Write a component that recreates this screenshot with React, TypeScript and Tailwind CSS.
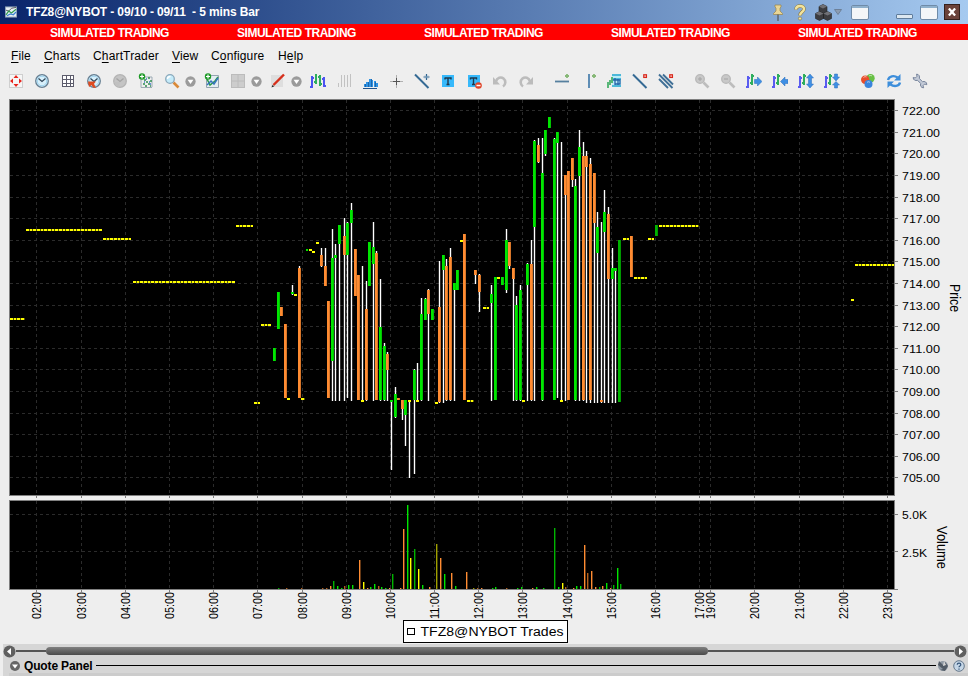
import * as React from "react"

type Tone = "g" | "o" | "G" | "O" | "y" | "Y"

const TONES: Record<Tone, string> = {
  g: "#00e600",
  G: "#00b400",
  o: "#ff8c32",
  O: "#b4601c",
  y: "#ffff00",
  Y: "#a0a000",
}

const HOURS: [number, string][] = [
  [36, "02:00"], [81, "03:00"], [125, "04:00"], [169, "05:00"], [213, "06:00"], [257, "07:00"], [302, "08:00"],
  [346, "09:00"], [390, "10:00"], [434, "11:00"], [478, "12:00"], [522, "13:00"], [567, "14:00"], [611, "15:00"],
  [655, "16:00"], [699, "17:00"], [710, "19:00"], [754, "20:00"], [799, "21:00"], [843, "22:00"], [887, "23:00"],
]

const PRICE_LINES = [110, 132, 153, 175, 197, 218, 240, 261, 283, 305, 326, 348, 369, 391, 413, 434, 456, 477]

// x, wick top, wick bottom, body top, body bottom, colour
const CANDLES: [number, number, number, number, number, Tone][] = [
  [274, 348, 361, 348, 361, "g"], [278, 292, 329, 292, 329, "g"], [281, 307, 316, 307, 316, "o"],
  [285, 324, 398, 324, 398, "o"], [292, 285, 295, 292, 294, "g"], [299, 266, 398, 268, 398, "o"],
  [321, 248, 267, 255, 266, "o"], [325, 248, 286, 266, 286, "o"], [328, 301, 398, 301, 398, "o"],
  [332, 229, 401, 258, 361, "g"], [335, 244, 401, 255, 258, "g"], [339, 225, 401, 225, 244, "g"],
  [344, 218, 401, 236, 255, "o"], [347, 222, 398, 223, 255, "g"], [351, 203, 401, 210, 223, "g"],
  [355, 249, 296, 249, 296, "o"], [358, 275, 400, 275, 400, "o"], [362, 266, 401, 266, 266, "g"],
  [366, 281, 401, 309, 400, "o"], [369, 242, 286, 242, 286, "g"], [373, 222, 401, 247, 264, "g"],
  [376, 251, 400, 253, 400, "o"], [380, 279, 401, 327, 400, "g"], [384, 343, 401, 346, 400, "g"],
  [387, 352, 401, 354, 370, "o"], [391, 400, 470, 400, 402, "g"], [395, 387, 418, 394, 417, "g"],
  [398, 398, 400, 398, 400, "o"], [402, 400, 420, 400, 409, "o"], [405, 400, 446, 400, 415, "g"],
  [409, 400, 478, 400, 400, "g"], [414, 369, 474, 370, 400, "g"], [417, 363, 401, 363, 363, "g"],
  [421, 298, 401, 314, 400, "g"], [425, 298, 320, 299, 320, "g"], [428, 289, 401, 290, 314, "o"],
  [432, 309, 320, 309, 320, "g"], [439, 261, 403, 307, 402, "o"], [443, 255, 403, 255, 270, "g"],
  [446, 259, 401, 266, 400, "o"], [450, 248, 401, 257, 400, "o"], [454, 283, 401, 283, 290, "g"],
  [457, 270, 290, 270, 290, "g"], [464, 234, 400, 234, 400, "o"], [475, 270, 284, 270, 275, "o"],
  [479, 274, 312, 275, 292, "o"], [491, 285, 401, 294, 303, "g"], [495, 277, 400, 277, 400, "g"],
  [502, 277, 285, 277, 285, "g"], [506, 229, 293, 240, 290, "g"], [509, 242, 269, 242, 266, "o"],
  [513, 268, 401, 268, 279, "o"], [516, 296, 401, 305, 400, "g"], [520, 285, 401, 290, 400, "g"],
  [527, 263, 401, 264, 285, "g"], [531, 240, 401, 264, 400, "o"], [534, 140, 401, 141, 227, "g"],
  [538, 138, 163, 145, 162, "o"], [542, 138, 401, 173, 400, "g"], [545, 130, 156, 130, 154, "g"],
  [549, 117, 128, 117, 128, "g"], [554, 138, 400, 139, 400, "g"], [557, 132, 398, 132, 143, "g"],
  [561, 142, 400, 142, 142, "g"], [565, 175, 401, 175, 195, "o"], [568, 171, 400, 171, 400, "o"],
  [572, 158, 187, 158, 180, "o"], [575, 179, 401, 186, 400, "g"], [579, 130, 401, 147, 176, "g"],
  [583, 142, 401, 156, 400, "o"], [586, 151, 403, 156, 167, "o"], [590, 158, 403, 164, 400, "o"],
  [594, 173, 403, 173, 223, "o"], [597, 212, 403, 227, 253, "g"], [601, 222, 403, 400, 402, "o"],
  [604, 190, 403, 212, 232, "g"], [608, 207, 403, 214, 279, "o"], [612, 248, 403, 268, 279, "g"],
  [615, 269, 403, 268, 271, "g"], [619, 240, 402, 240, 402, "G"], [631, 236, 277, 236, 277, "o"],
  [656, 225, 236, 225, 236, "G"],
]

// flat bars: start x, end x, y
const FLATS: [number, number, number][] = [
  [10, 25, 318], [26, 102, 229], [103, 131, 238], [133, 235, 281], [236, 253, 225], [254, 260, 402],
  [261, 271, 324], [287, 290, 398], [294, 297, 294], [301, 305, 398], [309, 312, 249], [312, 315, 251],
  [316, 319, 242], [361, 364, 400], [408, 411, 400], [416, 419, 400], [435, 438, 402], [460, 463, 240],
  [467, 474, 400], [483, 489, 307], [497, 500, 277], [522, 525, 400], [560, 563, 400], [623, 629, 238],
  [634, 647, 277], [648, 654, 238], [659, 699, 225], [851, 854, 299], [855, 894, 264],
]

const VOLUMES: [number, number, Tone][] = [
  [278, 588, "G"], [286, 588, "O"], [301, 588, "O"], [322, 588, "O"], [326, 588, "O"],
  [330, 586, "o"], [333, 581, "G"], [337, 586, "g"], [341, 588, "g"], [344, 586, "O"], [348, 585, "g"],
  [352, 585, "g"], [359, 560, "o"], [363, 582, "y"], [367, 588, "o"], [370, 587, "g"], [374, 584, "g"],
  [378, 586, "O"], [381, 587, "g"], [385, 588, "g"], [389, 588, "o"], [392, 574, "G"], [400, 588, "o"],
  [403, 529, "o"], [407, 505, "g"], [410, 558, "y"], [414, 549, "G"], [418, 569, "y"], [422, 585, "g"],
  [429, 587, "o"], [436, 544, "Y"], [440, 558, "o"], [444, 574, "g"], [451, 573, "o"], [455, 586, "g"],
  [466, 572, "o"], [473, 588, "Y"], [477, 588, "O"], [481, 588, "o"], [492, 588, "g"], [495, 587, "g"],
  [506, 588, "O"], [517, 588, "g"], [521, 587, "g"], [532, 588, "o"], [536, 587, "g"], [543, 588, "g"],
  [554, 528, "G"], [558, 587, "g"], [562, 583, "y"], [565, 587, "O"], [573, 588, "o"], [576, 586, "g"],
  [580, 586, "g"], [584, 545, "o"], [587, 573, "O"], [591, 571, "o"], [595, 587, "o"], [599, 587, "G"],
  [602, 586, "o"], [606, 583, "g"], [610, 588, "o"], [613, 585, "G"], [617, 568, "g"], [620, 584, "G"],
]

function Chart() {
  return (
    <svg width="968" height="552" viewBox="0 92 968 552" className="block" fontFamily="Liberation Sans, sans-serif">
      <g shapeRendering="crispEdges">
        <rect x="9" y="99" width="886" height="397" fill="#000" />
        <rect x="9" y="501" width="886" height="89" fill="#000" />
        <path d="M9 99.5h886M9.5 99v397M9 495.5h886M9 500.5h886M9.5 501v89M9 589.5h889" stroke="#808080" fill="none" />
        <path d="M894.5 99v397M894.5 501v89" stroke="#808080" />

        {/* Grid and axis ticks */}
        {PRICE_LINES.map((y) => (
          <React.Fragment key={y}>
            <path d={`M10 ${y + 0.5}h884`} stroke="#2b2b2b" strokeDasharray="3 3" />
            <path d={`M895 ${y + 0.5}h3`} stroke="#808080" />
          </React.Fragment>
        ))}
        {[514, 551].map((y) => (
          <React.Fragment key={y}>
            <path d={`M10 ${y + 0.5}h884`} stroke="#2b2b2b" strokeDasharray="3 3" />
            <path d={`M895 ${y + 0.5}h3`} stroke="#808080" />
          </React.Fragment>
        ))}
        {HOURS.map(([x, label]) => (
          <React.Fragment key={label}>
            <path d={`M${x + 0.5} 100v395M${x + 0.5} 501v88`} stroke="#2b2b2b" strokeDasharray="3 3" />
            <path d={`M${x + 0.5} 496v2M${x + 0.5} 590v2`} stroke="#808080" />
          </React.Fragment>
        ))}

        {/* Price bars */}
        {CANDLES.map(([x, top, bottom, open, close, tone]) => (
          <React.Fragment key={x}>
            {bottom - top > close - open && (
              <>
                <rect x={x - 1} y={top} width="3" height={bottom - top} fill="#fff" opacity=".18" />
                <rect x={x} y={top} width="1" height={bottom - top} fill="#fff" />
              </>
            )}
            {close > open && (
              <>
                <rect x={x - 1} y={open} width="3" height={close - open} fill={TONES[tone]} />
                <rect x={x + 1} y={open} width="1" height={close - open} fill="#000" opacity=".15" />
              </>
            )}
          </React.Fragment>
        ))}
        <rect x="306" y="249" width="2" height="2" fill="#00e600" />
        {FLATS.map(([from, to, y]) => (
          <React.Fragment key={`${from}-${y}`}>
            <rect x={from} y={y} width={to - from} height="2" fill="#5a5a00" />
            <path d={`M${from} ${y + 1}H${to}`} stroke="#ffff00" strokeWidth="2" strokeDasharray="2.67 1" />
          </React.Fragment>
        ))}

        {VOLUMES.map(([x, top, tone]) => (
          <React.Fragment key={x}>
            <rect x={x} y={top} width="1" height={589 - top} fill={TONES[tone]} />
            <rect x={x + 1} y={top} width="1" height={589 - top} fill={TONES[tone]} opacity=".4" />
          </React.Fragment>
        ))}
      </g>

      {/* Axis labels */}
      {PRICE_LINES.map((y, i) => (
        <text key={y} x="902" y={y + 5} fontSize="11.5" textLength="38" lengthAdjust="spacingAndGlyphs">
          {`${722 - i}.00`}
        </text>
      ))}
      <text x="902" y="518.5" fontSize="11.5" textLength="25" lengthAdjust="spacingAndGlyphs">5.0K</text>
      <text x="902" y="556.5" fontSize="11.5" textLength="25" lengthAdjust="spacingAndGlyphs">2.5K</text>
      {HOURS.map(([x, label]) => (
        <text key={label} transform={`translate(${x + 5} 619) rotate(-90)`} fontSize="12.5" textLength="27" lengthAdjust="spacingAndGlyphs">
          {label}
        </text>
      ))}
      <text transform="translate(950 284) rotate(90)" fontSize="14" textLength="28" lengthAdjust="spacingAndGlyphs">Price</text>
      <text transform="translate(937 526) rotate(90)" fontSize="14" textLength="43" lengthAdjust="spacingAndGlyphs">Volume</text>

      {/* Legend */}
      <rect x="403.5" y="620.5" width="164" height="22" fill="#fff" stroke="#000" />
      <rect x="407.5" y="628.5" width="7" height="6" fill="#fff" stroke="#000" />
      <text x="420.5" y="636" fontSize="12.5" textLength="143" lengthAdjust="spacingAndGlyphs">TFZ8@NYBOT Trades</text>
    </svg>
  )
}

function Icon({ children, size = 16 }: { children: React.ReactNode; size?: number }) {
  return (
    <svg width={size} height={size} viewBox="0 0 16 16" fill="none" className="shrink-0">
      {children}
    </svg>
  )
}

function Clock({ off = false }: { off?: boolean }) {
  return (
    <>
      <circle cx="8" cy="8" r="6.3" fill={off ? "#c4c4c4" : "#d8f0fb"} stroke={off ? "#b4b4b4" : "#667f92"} strokeWidth="1.3" />
      {!off && <circle cx="8" cy="8" r="4.8" stroke="#9cd2ee" />}
      <path d="M4.5 5.5 8 8.5l3.5-3" stroke={off ? "#a4a4a4" : "#33485a"} strokeWidth="1.3" />
    </>
  )
}

function Plus() {
  return (
    <>
      <circle cx="4" cy="3.5" r="3.2" fill="#1f9a28" />
      <path d="M4 1.5v4M2 3.5h4" stroke="#fff" strokeWidth="1.2" />
    </>
  )
}

function Magnifier({ off = false, sign }: { off?: boolean; sign?: string }) {
  return (
    <>
      <path d="m9.5 9.5 5 5" stroke={off ? "#bdbdbd" : "#d98a3a"} strokeWidth="2.6" />
      <circle cx="6" cy="6" r="4.3" fill={off ? "#c8c8c8" : "#c4ebfa"} stroke={off ? "#b8b8b8" : "#8ba9bb"} strokeWidth="1.3" />
      {!off && <path d="M3.5 6c0-2 1.5-2.5 3-2.5" stroke="#fff" strokeWidth="1.3" />}
      {sign && <path d={sign} stroke="#a4a4a4" />}
    </>
  )
}

function MiniBars() {
  return (
    <g shapeRendering="crispEdges">
      <path d="M2 3v12M0 13.5h2M3 4.5h1" stroke="#5a5cf0" strokeWidth="2" />
      <path d="M6 1v11M4 10h2M7 3h1" stroke="#2fae5e" strokeWidth="2" />
    </g>
  )
}

function DropDot() {
  return (
    <Icon size={11}>
      <circle cx="8" cy="8" r="7.5" fill="#9b9b9b" />
      <path d="M3.8 5.5h8.4L8 11.5z" fill="#fff" />
    </Icon>
  )
}

function TrendLine() {
  return <path d="m1 1.500 13.500 13.500" stroke="#356a94" strokeWidth="2" />
}

function RedMark() {
  return <rect x="11.800" y="1.800" width="2.600" height="2.600" fill="#fff" stroke="#d8281c" strokeWidth="1.300" />
}

function UndoArrow() {
  return (
    <>
      <path d="M4 8.500C5 4.500 9 3.500 11.500 5.500s2.500 6-.5 8" stroke="#bcbcbc" strokeWidth="2.600" />
      <path d="M1 4v7.500h7z" fill="#bcbcbc" />
    </>
  )
}

const TOOLS: { gap?: boolean; drop?: boolean; art: React.ReactNode }[] = [
  {
    art: (
      <>
        <rect x="1.5" y="1.5" width="13" height="13" fill="#f6f6f6" stroke="#cfcfcf" />
        <path d="M8 2 5.5 5h5zM8 14l-2.5-3h5zM2 8l3-2.5v5zM14 8l-3-2.5v5z" fill="#e8241c" />
      </>
    ),
  },
  { art: <Clock /> },
  {
    art: (
      <g shapeRendering="crispEdges">
        <rect x="2" y="2" width="12" height="12" fill="#fff" />
        <path d="M2.5 2v12M6.5 2v12M10.5 2v12M13.5 2v12M2 2.5h12M2 6.5h12M2 10.5h12M2 13.5h12" stroke="#5c5c6c" />
      </g>
    ),
  },
  {
    art: (
      <>
        <Clock />
        <path d="M2 8.5h8l-2 2.2 2 4.3-3-.5-1.5-2.5L3 14z" fill="#df4c22" />
      </>
    ),
  },
  {
    art: (
      <>
        <Clock off />
        <path d="M2 9h6l-1 5-3-1z" fill="#c0c0c0" />
      </>
    ),
  },
  {
    art: (
      <>
        <path d="M3 6v8.5h11M5 4h9v10" stroke="#9dabb5" />
        <path d="M6 7h2M10 5h2M8 9h2M12 8h2M5 11h2M10 11h2M7 13h2M12 13h1" stroke="#318d50" strokeWidth="1.5" />
        <path d="M8 6h1M11 9h1M6 9h1M12 11h1" stroke="#3b78c8" strokeWidth="1.5" />
        <Plus />
      </>
    ),
  },
  { drop: true, art: <Magnifier /> },
  {
    art: (
      <>
        <path d="M2.5 5v9.5h12V2.5H7" fill="#e4edf2" stroke="#94a4b0" />
        <path d="m3 6 3 6 5-4 3-4" stroke="#2a9a46" strokeWidth="1.5" />
        <path d="m3 12 4-4 3 3 4-6" stroke="#3674bd" strokeWidth="1.5" />
        <Plus />
      </>
    ),
  },
  {
    drop: true,
    art: (
      <>
        <rect x="1.5" y="1.5" width="13" height="13" fill="#cdcdcd" stroke="#bcbcbc" />
        <path d="M8 1v14M1 8h14" stroke="#bcbcbc" />
      </>
    ),
  },
  {
    drop: true,
    art: (
      <>
        <rect x="1" y="2" width="12" height="12" fill="#dedede" />
        <path d="M3.5 12 14 1.5" stroke="#d6301c" strokeWidth="2.4" />
        <path d="m1.5 14.5 1-2.5 1.8 1.3z" fill="#222" />
      </>
    ),
  },
  {
    art: (
      <g shapeRendering="crispEdges">
        <path d="M2 3v12M0 13.5h2M3 4.5h1" stroke="#4c54f0" strokeWidth="2" />
        <path d="M6 1v10M10 2v11M8 4h1M4 9h1M11 11h1" stroke="#2fae5e" strokeWidth="2" />
        <path d="M14 4v10M15 13h1M12 6h1" stroke="#4c54f0" strokeWidth="2" />
      </g>
    ),
  },
  {
    art: <path d="M2.5 10v4M5.5 2v12M8.5 2v12M11.5 2v12M14.500 1v13" stroke="#c2c2c2" shapeRendering="crispEdges" />,
  },
  {
    art: (
      <g shapeRendering="crispEdges">
        <path d="M2.500 14v-3M5 14v-5M7.500 14V6M10 14V7M12.500 14V8M14.500 14v-4" stroke="#2f93e4" strokeWidth="2" />
        <path d="M3.500 11v3M6.500 9v5M9.500 6v8M13.500 9v5" stroke="#1c66ac" />
        <path d="M1 15.5h14" stroke="#21548c" />
      </g>
    ),
  },
  {
    art: (
      <g shapeRendering="crispEdges">
        <path d="M8.500 2v13M2 8.500h13" stroke="#b0b0b0" />
        <path d="M8.500 5v7M5 8.500h7" stroke="#555" strokeWidth="1.500" />
      </g>
    ),
  },
  {
    art: (
      <>
        <TrendLine />
        <path d="M12.500 1v6M9.500 4h6" stroke="#2f6490" strokeWidth="1.200" />
        <path d="m11 2.500 3 3M14 2.500l-3 3" stroke="#7fa4c2" strokeWidth=".8" />
      </>
    ),
  },
  {
    art: (
      <>
        <rect x="2" y="2" width="12" height="12" fill="#37b9fb" />
        <path d="M5 5h6v1.5M5 4.5v2M8 5v6.5M6.5 11.5h3" stroke="#20384c" strokeWidth="1.4" />
      </>
    ),
  },
  {
    art: (
      <>
        <rect x="2" y="2" width="12" height="12" fill="#37b9fb" />
        <path d="M4.500 5h6v1.500M4.500 4.500v2M7.500 5v6.500M6 11.500h3" stroke="#20384c" strokeWidth="1.4" />
        <circle cx="12.500" cy="12.500" r="3.300" fill="#e04428" />
        <path d="M10.500 12.500h4" stroke="#fff" strokeWidth="1.500" />
      </>
    ),
  },
  { art: <UndoArrow /> },
  { art: <g transform="matrix(-1 0 0 1 16 0)"><UndoArrow /></g> },
  {
    gap: true,
    art: (
      <>
        <path d="M1 8.5h14" stroke="#56809f" strokeWidth="1.8" />
        <path d="M13 1v4M11 3h4" stroke="#87b877" strokeWidth="1.8" />
      </>
    ),
  },
  {
    art: (
      <>
        <path d="M9 1v14" stroke="#5e8db5" strokeWidth="2" />
        <path d="M14 1v4M12 3h4" stroke="#87b877" strokeWidth="1.8" />
      </>
    ),
  },
  {
    art: (
      <>
        <rect x="6" y="1" width="9" height="13" fill="#bcecf6" />
        <path d="M6 2h9M6 13h9M7 6h8" stroke="#27a8cf" strokeWidth="1.6" />
        <path d="M7 7h7v4H9M9 5v7M12 6v6" stroke="#2464a8" strokeWidth="1.3" />
        <path d="M2 15V9M4 12V7M6 10V4" stroke="#1ca048" strokeWidth="1.4" />
      </>
    ),
  },
  { art: <><TrendLine /><RedMark /></> },
  {
    art: (
      <>
        <path d="m1 1.500 13.500 13.500M1 6l9 9M5 1.500l10 10" stroke="#3f6f96" strokeWidth="1.900" />
        <RedMark />
      </>
    ),
  },
  { gap: true, art: <Magnifier off sign="M4 6h4M6 4v4" /> },
  { art: <Magnifier off sign="M4 6h4" /> },
  { art: <><MiniBars /><path d="M8.5 6.5h3V4L16 8.5 11.5 13v-2.5h-3z" fill="#3f8fe4" stroke="#2b6cb8" strokeWidth=".5" /></> },
  { art: <><MiniBars /><path d="M16 6.5h-3V4L8.5 8.5 13 13v-2.5h3z" fill="#3f8fe4" stroke="#2b6cb8" strokeWidth=".5" /></> },
  { art: <><MiniBars /><path d="M12 1 8.500 5h2v6h-2l3.500 4 3.500-4h-2V5h2z" fill="#3f8fe4" stroke="#2b6cb8" strokeWidth=".5" /></> },
  { art: <><MiniBars /><path d="M10.500 1h3v3h2L12 8 8.500 4h2zM10.500 15h3v-3h2L12 8.500 8.500 12h2z" fill="#3f8fe4" stroke="#2b6cb8" strokeWidth=".5" /></> },
  {
    gap: true,
    art: (
      <>
        <circle cx="10.500" cy="5.200" r="4.200" fill="#67c044" />
        <circle cx="5.200" cy="6.800" r="4.200" fill="#e84e2c" />
        <circle cx="8.500" cy="11" r="4" fill="#3985dd" />
        <path d="M3.500 4.500c1-1 2-1 3-.5M9 3c1-.7 2-.7 3 0M7 9.500c1-1 2-1 3 0" stroke="#fff" opacity=".6" />
      </>
    ),
  },
  {
    art: (
      <>
        <path d="M2 7c1-4 6-5 9.500-2.500" stroke="#3d8edb" strokeWidth="2.400" />
        <path d="M14.500 1v6.500H8z" fill="#3d8edb" />
        <path d="M14 9.500c-1 4-6 4.500-9.500 2" stroke="#3d8edb" strokeWidth="2.400" />
        <path d="M1.500 15V8.500H8z" fill="#3d8edb" />
      </>
    ),
  },
  {
    art: (
      <>
        <path
          d="M4.500 1.200C7 1 8 3.500 7.300 5.500l3.200 3.200c2-.7 4.500.3 4.300 3L12.700 11 11 12.700l.7 2.100c-2.700.2-3.700-2.300-3-4.300L5.500 7.300C3.500 8 1 7 1.200 4.500L3.300 5 5 3.300z"
          fill="#c4cbd8"
          stroke="#76839b"
        />
      </>
    ),
  },
]

function Toolbar() {
  return (
    <div className="flex h-[22px] items-center pl-[3px]">
      {TOOLS.map((tool, i) => (
        <React.Fragment key={i}>
          <div className={tool.gap ? "ml-2.5 flex w-[26px] shrink-0 justify-center" : "flex w-[26px] shrink-0 justify-center"}>
            <Icon>{tool.art}</Icon>
          </div>
          {tool.drop && (
            <div className="w-3.5 shrink-0">
              <DropDot />
            </div>
          )}
        </React.Fragment>
      ))}
    </div>
  )
}

function WindowBox() {
  return (
    <div className="h-[15px] w-[18px] rounded-[2px] border border-[#6f8ba8] bg-[#f4f6f8]">
      <div className="h-[2px] bg-[#8fb0cc]" />
    </div>
  )
}

function TitleBar() {
  return (
    <div className="flex h-6 items-center bg-gradient-to-r from-[#0a246a] to-[#a6caf0] pl-[5px] text-white">
      <svg width="12" height="12" viewBox="0 0 13 12" fill="none">
        <rect x=".5" y=".5" width="12" height="11" fill="#e8f0f6" stroke="#8fa3b8" />
        <path d="m1 4 3 1 3-3 5-1" stroke="#555" />
        <path d="m1 9 3-4 3 2 5-4" stroke="#2f9b4d" strokeWidth="1.300" />
        <path d="m2 10 4-2 3 1 3-3" stroke="#3c82cf" strokeWidth="1.300" />
      </svg>
      <span className="ml-[9px] whitespace-pre text-[12px] font-bold tracking-[-0.13px]">TFZ8@NYBOT - 09/10 - 09/11  - 5 mins Bar</span>
      <div className="ml-auto flex items-center pr-2">
        <svg width="10" height="17" viewBox="0 0 10 17">
          <path d="M2 1h6v2L7 4v3l2.500 2.500v1h-9v-1L3 7V4L2 3z" fill="#e8d596" stroke="#9a8448" strokeWidth=".7" />
          <path d="M5 10.500V17" stroke="#555" strokeWidth="1.200" />
        </svg>
        <svg width="12" height="17" viewBox="0 0 12 17" className="ml-[11px]" fill="none">
          <path d="M2 5.500C2 .8 10 .8 10 5c0 3-4 3-4 6.500" stroke="#857238" strokeWidth="3.500" />
          <path d="M2 5.500C2 .8 10 .8 10 5c0 3-4 3-4 6.500" stroke="#f3e39c" strokeWidth="2.500" />
          <circle cx="6" cy="14.500" r="1.600" fill="#f3e39c" stroke="#857238" strokeWidth=".6" />
        </svg>
        <svg width="17" height="17" viewBox="0 0 17 17" className="ml-[9px]">
          <path d="M4 2.500 8 .500l4 2v5l-4 2-4-2zM.500 9.500l4-2 4 2v5l-4 2-4-2zM8.500 9.500l4-2 4 2v5l-4 2-4-2z" fill="#3c3c40" stroke="#222" strokeWidth=".6" />
          <path d="m4 2.500 4-2 4 2-4 2zM.500 9.500l4-2 4 2-4 2zM8.500 9.500l4-2 4 2-4 2z" fill="#707075" />
        </svg>
        <svg width="8" height="6" viewBox="0 0 8 6" className="ml-[2px]">
          <path d="M.5.5h7L4 5.500z" fill="#8c9db3" stroke="#6d8098" />
        </svg>
        <div className="ml-[9px]"><WindowBox /></div>
        <div className="mt-2 ml-[27px] h-[5px] w-[17px] rounded-[1px] border border-[#5f7d9c] bg-[#dce7f0]" />
        <div className="ml-[7px]"><WindowBox /></div>
        <div className="ml-1.5 flex size-4 items-center justify-center border border-[#35201c] bg-[#6b423a]">
          <svg width="8" height="8" viewBox="0 0 9 8">
            <path d="m1 0 7 8M8 0 1 8" stroke="#fff" strokeWidth="2.500" />
          </svg>
        </div>
      </div>
    </div>
  )
}

const MENU = [
  { before: "", key: "F", after: "ile", width: "w-[33px]" },
  { before: "", key: "C", after: "harts", width: "w-[49px]" },
  { before: "C", key: "h", after: "artTrader", width: "w-[79px]" },
  { before: "", key: "V", after: "iew", width: "w-[39px]" },
  { before: "C", key: "o", after: "nfigure", width: "w-[67px]" },
  { before: "H", key: "e", after: "lp", width: "w-[40px]" },
]

function ScrollButton({ right = false }: { right?: boolean }) {
  return (
    <svg width="13" height="13" viewBox="0 0 13 13" className="shrink-0">
      <circle cx="6.500" cy="6.500" r="6" fill="#606060" />
      <path d={right ? "M5 3v7l4-3.500z" : "M8 3v7L4 6.500z"} fill="#fff" />
    </svg>
  )
}

export default function App() {
  return (
    <div className="flex h-[676px] w-[968px] flex-col overflow-hidden bg-[#eeeeee] font-['Liberation_Sans',Arial,sans-serif] text-black">
      <TitleBar />

      {/* Paper account banner */}
      <div className="flex h-4 items-start overflow-hidden bg-[#ff0000] pt-px pl-[50px] text-[12px] leading-4 font-bold tracking-[-0.48px] text-white">
        {[0, 1, 2, 3, 4].map((n) => (
          <span key={n} className="w-[187px] shrink-0 whitespace-nowrap">SIMULATED TRADING</span>
        ))}
      </div>

      <div className="flex h-[30px] items-center pt-0.5 pl-[11px] text-[12px] tracking-[0.15px]">
        {MENU.map((item) => (
          <span key={item.key} className={`${item.width} whitespace-nowrap`}>
            {item.before}
            <span className="underline underline-offset-2">{item.key}</span>
            {item.after}
          </span>
        ))}
      </div>

      <Toolbar />
      <Chart />

      {/* Scrollbar and quote panel */}
      <div className="ml-[3px] flex h-8 flex-col bg-[#d6d6d6]">
        <div className="flex h-[14px] items-center pr-px">
          <ScrollButton />
          <div className="h-0.5 w-[30px] bg-[#555]" />
          <div className="h-2 w-[662px] rounded-full bg-gradient-to-b from-[#808080] to-[#4a4a4a]" />
          <div className="h-0.5 flex-1 bg-[#555]" />
          <ScrollButton right />
        </div>
        <div className="flex h-[15px] items-center pl-[7px]">
          <svg width="10" height="10" viewBox="0 0 10 10">
            <circle cx="5" cy="5" r="5" fill="#666" />
            <path d="M2 3.500h6L5 7.500z" fill="#fff" />
          </svg>
          <span className="ml-1 w-[72px] text-[12px] font-bold tracking-[-0.15px] whitespace-nowrap">Quote Panel</span>
          <div className="h-px w-[840px] shrink-0 bg-black" />
          <svg width="12" height="12" viewBox="0 0 12 12" className="ml-[1px] shrink-0">
            <circle cx="6" cy="6" r="5" fill="#8f99a4" />
            <path d="m2 1 5 5 1-4 3 4-3 5-5-1 3-1-5-4z" fill="#525c67" />
            <path d="m7 1 2 4-3 1z" fill="#d6d6d6" />
          </svg>
          <svg width="12" height="12" viewBox="0 0 12 12" className="ml-1 shrink-0" fill="none">
            <circle cx="6" cy="6" r="5.300" fill="#c5d6e6" stroke="#66788b" />
            <path d="M4.200 4.700c0-2.200 3.600-2.200 3.600 0C7.800 6 6 6 6 7.300M6 8.500v1.200" stroke="#34557a" strokeWidth="1.200" />
          </svg>
        </div>
        <div className="ml-1.5 flex-1 bg-[#cccccc]" />
      </div>
    </div>
  )
}
